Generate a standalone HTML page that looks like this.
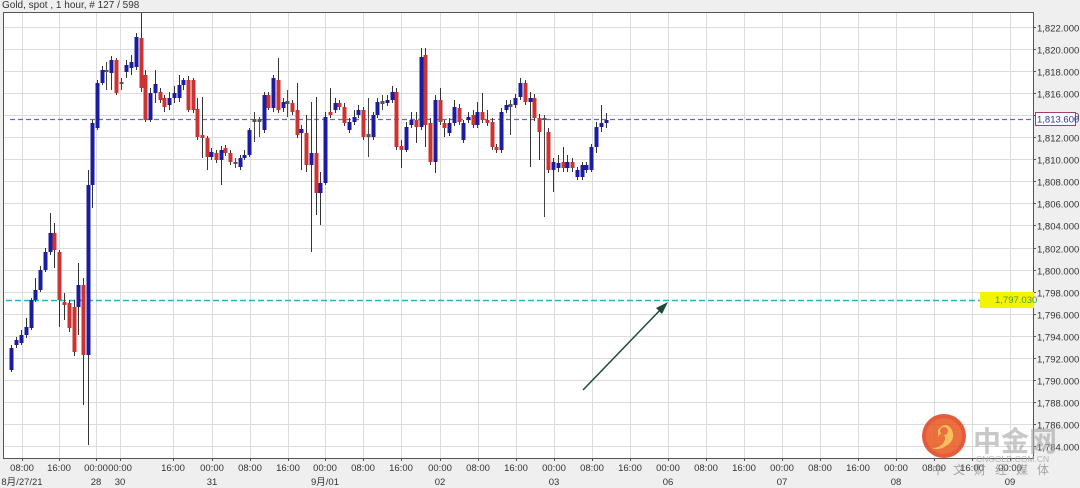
<!DOCTYPE html>
<html><head><meta charset="utf-8"><style>
html,body{margin:0;padding:0;background:#efefef;width:1080px;height:488px;overflow:hidden;font-family:"Liberation Sans","Noto Sans CJK SC",sans-serif}
svg{position:absolute;left:0;top:0}
</style></head><body>
<svg id="s" width="1080" height="488" xmlns="http://www.w3.org/2000/svg" font-family="Liberation Sans, Noto Sans CJK SC, sans-serif">
<rect x="0" y="0" width="1080" height="488" fill="#efefef"/>
<rect x="3.5" y="12.5" width="1030" height="446" fill="#fff" stroke="#555" stroke-width="1"/>
<g id="grid" stroke="#dcdcdc" stroke-width="1"></g>
<g id="lbl" font-size="9.5" fill="#333"></g>
<text x="2" y="8" font-size="10" fill="#333">Gold, spot , 1 hour, # 127 / 598</text>
<line x1="10" y1="119.5" x2="1033" y2="119.5" stroke="#6a6aa8" stroke-width="1.2" stroke-dasharray="5,3"/>
<line x1="6" y1="300.5" x2="1033" y2="300.5" stroke="#2fb0c4" stroke-width="1.5" stroke-dasharray="6,3"/>
<g id="c"></g>
<rect x="980" y="292" width="54" height="16" fill="#f4f400"/>
<text x="995" y="303" font-size="9.5" fill="#4a9a3a">1,797.030</text>
<rect x="1035.5" y="112.5" width="40" height="13" fill="#fff" stroke="#a04070"/>
<text x="1037" y="122.5" font-size="9.5" fill="#3030a0">1,813.600</text>
<line x1="583" y1="390" x2="664" y2="306" stroke="#1d4a3c" stroke-width="1.5"/>
<polygon points="668,302 656,308 662,314" fill="#1d4a3c"/>
<g opacity="0.85">
<circle cx="944" cy="436" r="22" fill="#e0401c"/>
<circle cx="944" cy="436" r="18" fill="#e8561e"/>
<path d="M938 430 q8 -10 14 0 q4 10 -6 16 q-8 5 -14 2 q8 0 12 -6 q3 -6 -2 -8 q-4 0 -4 4 z" fill="#f6b640"/>
<circle cx="944" cy="431" r="4" fill="#e8561e"/>
<text x="973" y="451" font-size="28" fill="#aaa" font-weight="bold" opacity="0.75">中金网</text>
<text x="976" y="462" font-size="8.5" fill="#aaa">CNGOLD.COM.CN</text>
<text x="932" y="474" font-size="12" fill="#999" letter-spacing="9">中文财经媒体</text>
</g>
</svg>
<script>
var NS="http://www.w3.org/2000/svg";
function el(p,t,a,txt){var e=document.createElementNS(NS,t);for(var k in a)e.setAttribute(k,a[k]);if(txt)e.textContent=txt;p.appendChild(e);return e;}
var g=document.getElementById('grid'),L=document.getElementById('lbl'),C=document.getElementById('c');
for(var i=0;i<=19;i++){var y=Math.round(27+i*22.05)+0.5;el(g,'line',{x1:4,y1:y,x2:1033,y2:y});
el(g,'line',{x1:1033,y1:y,x2:1036,y2:y,stroke:'#555'});
var v=1822-2*i;el(L,'text',{x:1037,y:y+4},'1,'+(v+'').slice(1)+'.000');}
var xs=[22,59,96,120,173,212,250,288,325,363,401,440,478,516,554,592,630,668,706,744,782,820,858,896,934,972,1010];
var ts=['08:00','16:00','00:00','00:00','16:00','00:00','08:00','16:00','00:00','08:00','16:00','00:00','08:00','16:00','00:00','08:00','16:00','00:00','08:00','16:00','00:00','08:00','16:00','00:00','08:00','16:00','00:00'];
xs.forEach(function(x,i){el(g,'line',{x1:x+.5,y1:13,x2:x+.5,y2:458});el(g,'line',{x1:x+.5,y1:458,x2:x+.5,y2:461,stroke:'#555'});el(L,'text',{x:x,y:471,'text-anchor':'middle'},ts[i]);});
[[22,'8月/27/21'],[96,'28'],[120,'30'],[212,'31'],[325,'9月/01'],[440,'02'],[554,'03'],[668,'06'],[782,'07'],[896,'08'],[1010,'09']].forEach(function(d){el(L,'text',{x:d[0],y:485,'text-anchor':'middle'},d[1]);});
var D=[[11,370,348,345,372],[16,345,340,337,348],[21,343,335,330,345],[26,335,327,318,338],[31,328,300,298,330],[35,300,290,278,302],[40,290,270,266,292],[45,270,252,248,272],[50,252,233,213,255],[54,233,250,223,268],[59,252,300,250,327],[64,302,305,293,320],[69,303,328,300,332],[74,307,352,300,356],[78,307,285,263,335],[83,285,355,278,405],[88,355,185,170,445],[92,185,123,120,208],[97,128,83,80,130],[102,83,70,66,85],[106,70,72,62,90],[111,73,60,56,90],[116,60,93,58,95],[121,82,84,78,90],[126,72,65,60,78],[131,68,62,55,75],[136,67,37,33,70],[141,38,88,13,92],[145,75,120,70,122],[150,120,93,88,122],[155,93,84,70,103],[160,92,100,88,103],[164,98,107,95,112],[169,105,98,92,110],[174,98,93,86,103],[179,98,85,75,102],[183,85,80,78,90],[188,80,110,76,112],[193,80,110,78,113],[197,109,137,98,140],[202,135,138,97,158],[207,138,157,136,170],[211,157,152,148,160],[216,153,160,150,163],[221,160,150,146,185],[225,148,153,145,156],[230,153,162,150,165],[235,162,164,158,168],[240,167,158,155,170],[244,158,155,150,160],[249,155,130,128,157],[254,120,121,112,142],[259,120,121,117,137],[264,130,95,92,133],[268,95,108,92,110],[273,108,78,75,112],[278,80,110,58,113],[283,108,102,98,112],[287,102,103,90,117],[292,103,112,100,115],[297,110,135,83,138],[301,133,129,125,170],[306,133,165,115,172],[311,165,153,102,252],[316,153,193,97,215],[320,193,183,172,225],[325,183,117,112,185],[330,112,115,88,118],[335,110,103,98,113],[339,103,107,100,110],[344,107,123,103,126],[349,130,122,118,133],[354,122,117,110,125],[358,115,110,105,118],[363,110,137,107,140],[368,135,136,98,157],[373,137,115,112,140],[377,115,102,98,118],[382,102,103,95,110],[387,103,100,95,106],[392,100,92,86,103],[396,92,147,88,150],[401,146,150,140,168],[406,150,127,122,152],[411,125,120,112,128],[416,120,127,112,143],[421,127,57,48,130],[425,55,125,48,147],[430,123,162,118,165],[435,162,100,95,173],[440,100,122,88,125],[444,123,128,120,137],[449,133,123,118,136],[454,123,107,100,126],[459,108,122,104,125],[463,140,123,120,143],[468,120,117,112,123],[473,115,125,110,128],[477,125,112,102,128],[482,112,120,93,123],[487,120,123,110,126],[492,122,147,118,150],[496,147,150,144,153],[501,150,112,108,153],[506,110,105,100,113],[510,105,106,100,135],[515,105,98,94,108],[520,97,83,78,100],[525,83,102,80,105],[530,102,98,92,167],[534,98,118,94,121],[539,118,132,114,160],[544,118,120,115,217],[548,132,170,128,173],[553,170,162,158,192],[558,168,163,155,172],[563,162,168,147,172],[567,168,162,155,172],[572,162,168,158,172],[577,177,170,167,180],[582,177,165,162,180],[586,170,165,162,173],[591,170,147,144,172],[596,147,127,122,153],[601,127,123,105,132],[606,123,120,113,128]];
D.forEach(function(d){var x=d[0],o=d[1],c=d[2],h=d[3],l=d[4];var up=c<o;var col=up?'#1c1ca0':'#cc3333';
if(Math.abs(o-c)<3)col='#555';
el(C,'line',{x1:x+.5,y1:h,x2:x+.5,y2:l,stroke:(Math.abs(o-c)<3?'#444':'#333'),'stroke-width':1});
var t=Math.min(o,c),b=Math.max(o,c);if(b-t<2){t-=1;b+=1;}
el(C,'rect',{x:x-1.5,y:t,width:4,height:b-t,fill:col});});
</script>
</body></html>
